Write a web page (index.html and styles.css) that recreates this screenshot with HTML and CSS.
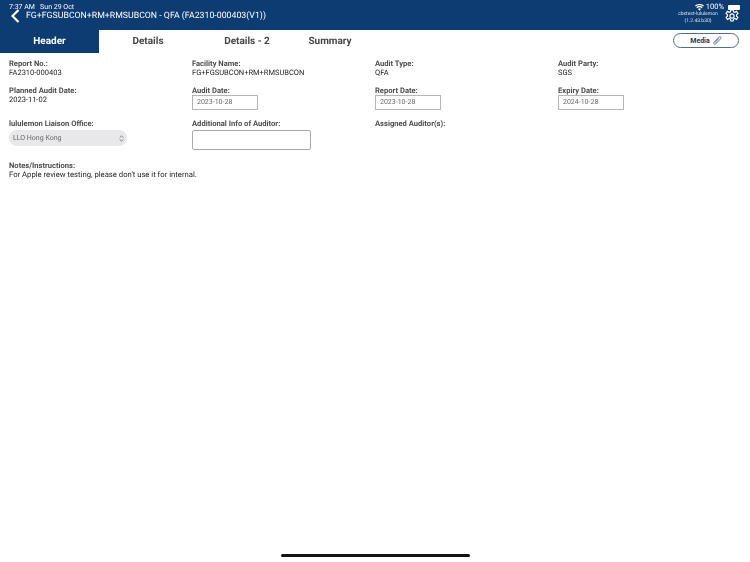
FILE: index.html
```html
<!DOCTYPE html>
<html lang="en">
<head>
    <meta charset="UTF-8">
    <title>Audit Header</title>
    <link rel="stylesheet" href="styles.css">
</head>
<body>
    <div class="screen">
        <div class="topbar">
            <svg class="back" width="10" height="14" viewBox="0 0 10 14"><path d="M8.5 1 L2.5 7 L8.5 13" fill="none" stroke="#fff" stroke-width="2.2"/></svg>
            <div class="status-time">7:37 AM&nbsp;&nbsp; Sun 29 Oct</div>
            <div class="title">FG+FGSUBCON+RM+RMSUBCON - QFA (FA2310-000403(V1))</div>
            <div class="status-right">
                <svg width="9" height="7" viewBox="0 0 18 14"><path d="M9 13.5 L6 10 A4.5 4.5 0 0 1 12 10 Z M4.4 8.3 L2.8 6.4 A9.5 9.5 0 0 1 15.2 6.4 L13.6 8.3 A7 7 0 0 0 4.4 8.3 Z M1.6 5 L0 3.2 A14 14 0 0 1 18 3.2 L16.4 5 A11.5 11.5 0 0 0 1.6 5 Z" fill="#fff"/></svg>
                <span>100%</span>
                <span class="battery"></span>
            </div>
            <div class="user">cbxtest-lululemon<br>(1.2.43.b30)</div>
            <svg class="gear" width="14" height="14" viewBox="0 0 24 24" fill="none" stroke="#fff" stroke-width="2"><circle cx="12" cy="12" r="3.6"/><path d="M10 1.5h4l.7 3.2 2.2 1 2.9-1.6 2.4 3.6-2.4 2.1v2.4l2.4 2.1-2.4 3.6-2.9-1.6-2.2 1-.7 3.2h-4l-.7-3.2-2.2-1-2.9 1.6-2.4-3.6 2.4-2.1v-2.4L1.800 7.700l2.400-3.600 2.900 1.600 2.200-1z"/></svg>
        </div>

        <div class="tabs">
            <div class="tab tab-active">Header</div>
            <div class="tab tab-details">Details</div>
            <div class="tab tab-details2">Details - 2</div>
            <div class="tab tab-summary">Summary</div>
            <button class="media">Media
                <svg width="10" height="10" viewBox="0 0 12 12" fill="none" stroke="#7f95b3" stroke-width="1.3"><path d="M10.500 3 L4.500 9.500 A1.500 1.500 0 0 1 2.300 7.500 L8.500 1.300 A1 1 0 0 1 10.500 3 Z M8 3 L3.500 7.800"/></svg>
            </button>
        </div>

        <div class="form">
            <div class="field"><label>Report No.:</label><div class="value">FA2310-000403</div></div>
            <div class="field"><label>Facility Name:</label><div class="value">FG+FGSUBCON+RM+RMSUBCON</div></div>
            <div class="field"><label>Audit Type:</label><div class="value">QFA</div></div>
            <div class="field"><label>Audit Party:</label><div class="value">SGS</div></div>

            <div class="field"><label>Planned Audit Date:</label><div class="value">2023-11-02</div></div>
            <div class="field"><label>Audit Date:</label><div class="date-box">2023-10-28</div></div>
            <div class="field"><label>Report Date:</label><div class="date-box">2023-10-28</div></div>
            <div class="field"><label>Expiry Date:</label><div class="date-box">2024-10-28</div></div>

            <div class="field">
                <label>lululemon Liaison Office:</label>
                <div class="select">
                    <span>LLO Hong Kong</span>
                    <svg width="5" height="7" viewBox="0 0 5 7" fill="none" stroke="#666" stroke-width="0.8"><path d="M0.700 2.600 L2.500 0.800 L4.300 2.600 M0.700 4.400 L2.500 6.200 L4.300 4.400"/></svg>
                </div>
            </div>
            <div class="field"><label>Additional Info of Auditor:</label><div class="text-box"></div></div>
            <div class="field"><label>Assigned Auditor(s):</label></div>
            <div class="field"></div>
        </div>

        <div class="notes">
            <label>Notes/Instructions:</label>
            <div class="notes-text">For Apple review testing, please don't use it for internal.</div>
        </div>

        <div class="home-indicator"></div>
    </div>
</body>
</html>
```

FILE: styles.css
```css
* {
    box-sizing: border-box;
}
html, body {
    margin: 0;
    padding: 0;
}
body {
    font-family: Roboto, "Liberation Sans", sans-serif;
    background: #fff;
    color: #333;
    text-rendering: geometricPrecision;
}
.screen {
    position: relative;
    width: 750px;
    height: 562px;
    overflow: hidden;
    opacity: 0.99;
}
.topbar {
    position: relative;
    height: 30px;
    background: #0a3a70;
    color: #fff;
}
.back {
    position: absolute;
    left: 10px;
    top: 9px;
}
.status-time {
    position: absolute;
    left: 9px;
    top: 3px;
    font-size: 7px;
    line-height: 8px;
}
.title {
    position: absolute;
    left: 26px;
    top: 10px;
    font-size: 8.750px;
    line-height: 12px;
    white-space: nowrap;
}
.status-right {
    position: absolute;
    right: 10px;
    top: 3px;
    display: flex;
    align-items: center;
    gap: 2px;
    font-size: 7.500px;
    line-height: 8px;
}
.battery {
    display: block;
    width: 12px;
    height: 5px;
    margin-left: 2px;
    background: #fff;
    border-radius: 1px;
}
.user {
    position: absolute;
    left: 669px;
    width: 58px;
    top: 11px;
    font-size: 5px;
    line-height: 7px;
    text-align: center;
    opacity: 0.85;
}
.gear {
    position: absolute;
    left: 725px;
    top: 9px;
}
.tabs {
    display: flex;
    align-items: center;
    height: 23px;
}
.tab {
    font-size: 10px;
    font-weight: 700;
    color: #444;
    text-align: center;
}
.tab-active {
    width: 99px;
    height: 23px;
    line-height: 23px;
    background: #0a3a70;
    color: #fff;
}
.tab-details {
    width: 98px;
}
.tab-details2 {
    width: 100px;
}
.tab-summary {
    width: 66px;
}
.media {
    position: absolute;
    left: 673px;
    top: 33px;
    width: 66px;
    height: 15px;
    padding: 0;
    display: flex;
    align-items: center;
    justify-content: center;
    gap: 2px;
    background: #fff;
    border: 1px solid #4d6c90;
    border-radius: 8px;
    font-family: inherit;
    font-size: 7px;
    font-weight: 700;
    color: #0a3a70;
}
.form {
    display: grid;
    grid-template-columns: repeat(4, 183px);
    grid-template-rows: 27px 33px 38px;
    padding: 6px 0 0 9px;
}
.field label, .notes label {
    display: block;
    font-size: 7.600px;
    line-height: 9px;
    font-weight: 700;
    color: #4a4a4a;
}
.value {
    font-size: 7.500px;
    line-height: 10px;
    color: #222;
}
.date-box {
    width: 66px;
    height: 15px;
    padding-left: 4px;
    border: 1px solid #b5b5b5;
    font-size: 7px;
    line-height: 13px;
    color: #666;
}
.select {
    display: flex;
    align-items: center;
    justify-content: space-between;
    width: 118px;
    height: 16px;
    margin-top: 2px;
    padding: 0 3px 0 4px;
    background: #e8e8ea;
    border-radius: 8px;
    font-size: 7px;
    color: #666;
}
.text-box {
    width: 119px;
    height: 20px;
    margin-top: 2px;
    background: #fff;
    border: 1px solid #a8a8a8;
    border-radius: 2px;
}
.notes {
    padding: 4px 0 0 9px;
}
.notes-text {
    font-size: 7.700px;
    line-height: 10px;
    color: #222;
}
.home-indicator {
    position: absolute;
    left: 281px;
    top: 554px;
    width: 189px;
    height: 3px;
    background: #111;
    border-radius: 2px;
}
```
